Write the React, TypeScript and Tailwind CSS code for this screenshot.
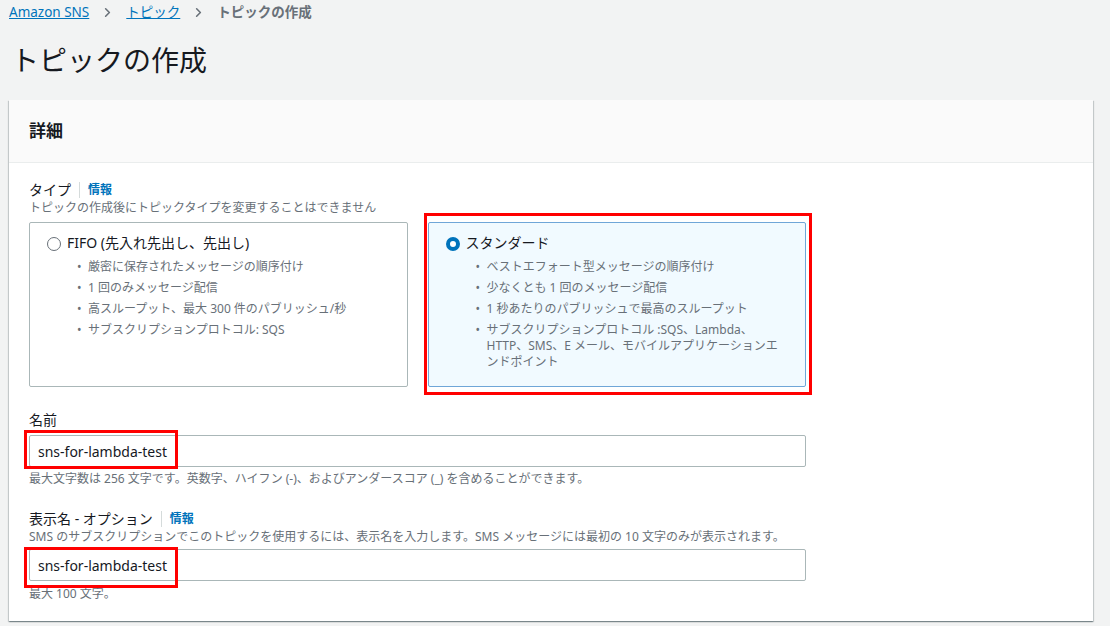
import { ChevronRight } from "lucide-react";

const fifoItems = [
  "厳密に保存されたメッセージの順序付け",
  "1 回のみメッセージ配信",
  "高スループット、最大 300 件のパブリッシュ/秒",
  "サブスクリプションプロトコル: SQS",
];

const standardItems = [
  "ベストエフォート型メッセージの順序付け",
  "少なくとも 1 回のメッセージ配信",
  "1 秒あたりのパブリッシュで最高のスループット",
];

function Radio({ checked }: { checked?: boolean }) {
  return checked ? (
    <span className="mt-[1px] inline-block h-[14px] w-[14px] shrink-0 rounded-full border-[4px] border-[#0073bb] bg-white" />
  ) : (
    <span className="mt-[1px] inline-block h-[14px] w-[14px] shrink-0 rounded-full border-[1.5px] border-[#687078] bg-white" />
  );
}

function Bullet() {
  return <span className="w-[11px] shrink-0 text-[12px]">•</span>;
}

export default function App() {
  return (
    <div
      className="h-[626px] w-full overflow-hidden bg-[#f2f3f3] text-[#16191f]"
      style={{ fontFamily: '"Noto Sans", "Noto Sans CJK JP", sans-serif' }}
    >
      {/* breadcrumb */}
      <div className="flex h-[24px] items-center gap-[11px] pl-[9px] text-[13.5px]">
        <span className="text-[#0073bb] underline">Amazon SNS</span>
        <ChevronRight size={15} strokeWidth={2.5} className="text-[#687078]" />
        <span className="text-[#0073bb] underline">トピック</span>
        <ChevronRight size={15} strokeWidth={2.5} className="text-[#687078]" />
        <span className="font-bold text-[#687078]">トピックの作成</span>
      </div>

      {/* title */}
      <h1 className="mt-[16px] pl-[11px] text-[28px] leading-[40px] text-[#16191f]">トピックの作成</h1>

      {/* panel */}
      <div className="ml-[9px] mt-[20px] w-[1084px] bg-white shadow-[0_1px_1px_0_rgba(0,28,36,0.3),1px_1px_1px_0_rgba(0,28,36,0.15),-1px_1px_1px_0_rgba(0,28,36,0.15)]">
        <div className="flex h-[63px] items-center border-b border-[#eaeded] bg-[#fafafa] px-[20px]">
          <h2 className="text-[17px] font-bold">詳細</h2>
        </div>

        <div className="w-[797px] pl-[20px] pt-[17px] pb-[19px]">
          {/* type */}
          <div className="flex items-center text-[14px] leading-[20px]">
            <span>タイプ</span>
            <span className="mx-[8px] h-[16px] w-px bg-[#d5dbdb]" />
            <span className="text-[12px] font-bold text-[#0073bb]">情報</span>
          </div>
          <p className="text-[12px] leading-[16px] text-[#687078]">
            トピックの作成後にトピックタイプを変更することはできません
          </p>

          <div className="mt-[6px] flex gap-[20px]">
            <div className="h-[165px] w-[379px] rounded-[2px] border border-[#aab7b8] px-[17px] pt-[11px]">
              <div className="flex items-center gap-[6px] text-[14px] leading-[18px]">
                <Radio />
                <span>FIFO (先入れ先出し、先出し)</span>
              </div>
              <ul className="mt-[7px] pl-[30px] text-[12px] leading-[16px] text-[#687078]">
                {fifoItems.map((item, i) => (
                  <li key={i} className="mb-[5px] flex">
                    <Bullet />
                    <span>{item}</span>
                  </li>
                ))}
              </ul>
            </div>

            <div className="relative h-[165px] w-[379px] rounded-[2px] border border-[#6fa6d8] bg-[#f1faff] px-[17px] pt-[11px]">
              <div className="flex items-center gap-[6px] text-[14px] leading-[18px]">
                <Radio checked />
                <span>スタンダード</span>
              </div>
              <ul className="mt-[7px] pl-[30px] text-[12px] leading-[16px] text-[#687078]">
                {standardItems.map((item, i) => (
                  <li key={i} className="mb-[5px] flex">
                    <Bullet />
                    <span>{item}</span>
                  </li>
                ))}
                <li className="flex">
                  <Bullet />
                  <span className="whitespace-nowrap">
                    サブスクリプションプロトコル :SQS、Lambda、
                    <br />
                    HTTP、SMS、E メール、モバイルアプリケーションエ
                    <br />
                    ンドポイント
                  </span>
                </li>
              </ul>
              <div className="pointer-events-none absolute -bottom-[9px] -left-[5px] -right-[7px] -top-[10px] border-[3px] border-[#ff0000]" />
            </div>
          </div>

          {/* name */}
          <div className="mt-[23px] text-[14px] leading-[20px]">名前</div>
          <div className="relative mt-[5px]">
            <div className="flex h-[32px] w-[777px] items-center rounded-[2px] border border-[#aab7b8] px-[8px] text-[14px]">
              sns-for-lambda-test
            </div>
            <div className="pointer-events-none absolute -left-[5px] -top-[5px] h-[39px] w-[154px] border-[3px] border-[#ff0000]" />
          </div>
          <p className="mt-[4px] text-[12px] leading-[16px] text-[#687078]">
            最大文字数は 256 文字です。英数字、ハイフン (-)、およびアンダースコア (_) を含めることができます。
          </p>

          {/* display name */}
          <div className="mt-[22px] flex items-center text-[14px] leading-[20px]">
            <span>表示名 - オプション</span>
            <span className="mx-[8px] h-[16px] w-px bg-[#d5dbdb]" />
            <span className="text-[12px] font-bold text-[#0073bb]">情報</span>
          </div>
          <p className="text-[12px] leading-[16px] text-[#687078]">
            SMS のサブスクリプションでこのトピックを使用するには、表示名を入力します。SMS メッセージには最初の 10 文字のみが表示されます。
          </p>
          <div className="relative mt-[4px]">
            <div className="flex h-[32px] w-[777px] items-center rounded-[2px] border border-[#aab7b8] px-[8px] text-[14px]">
              sns-for-lambda-test
            </div>
            <div className="pointer-events-none absolute -left-[5px] -top-[2px] h-[41px] w-[154px] border-[3px] border-[#ff0000]" />
          </div>
          <p className="mt-[5px] text-[12px] leading-[16px] text-[#687078]">最大 100 文字。</p>
        </div>
      </div>
    </div>
  );
}
